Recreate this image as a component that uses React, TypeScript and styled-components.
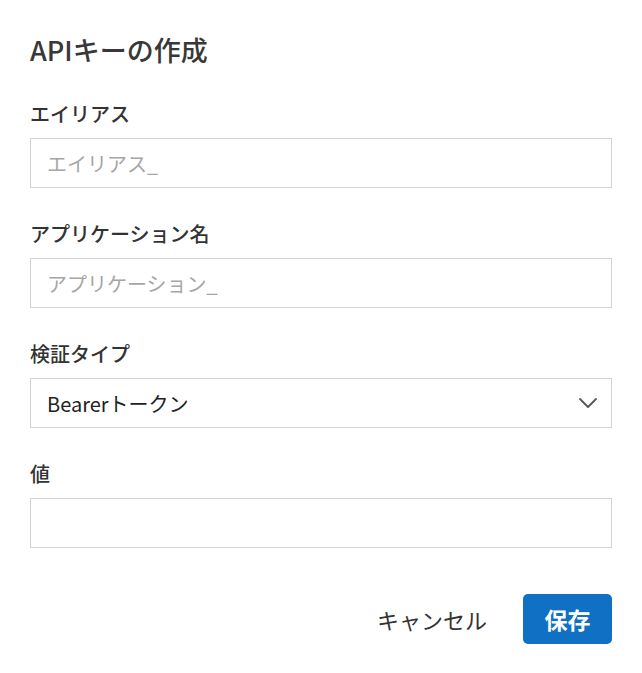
import styled, { createGlobalStyle } from "styled-components";

const GlobalStyle = createGlobalStyle`
  body {
    margin: 0;
    background: #ffffff;
    font-family: "Noto Sans CJK JP", "Noto Sans", sans-serif;
    color: #333333;
  }
`;

const Dialog = styled.div`
  width: 642px;
  box-sizing: border-box;
  padding: 32px 30px 0 30px;
`;

const Title = styled.h2`
  margin: 0 0 33px 0;
  font-size: 27px;
  line-height: 36px;
  font-weight: 500;
  color: #383838;
`;

const FormGroup = styled.div`
  display: flex;
  flex-direction: column;
  margin-bottom: 33px;
`;

const Label = styled.label`
  font-size: 20px;
  line-height: 26px;
  font-weight: 500;
  color: #333333;
  margin-bottom: 11px;
`;

const Input = styled.input`
  box-sizing: border-box;
  width: 100%;
  height: 50px;
  padding: 0 16px;
  border: 1px solid #d3d3d3;
  border-radius: 0;
  font-family: inherit;
  font-size: 20px;
  color: #222222;
  outline: none;
  &::placeholder {
    color: #a6a6a6;
  }
`;

const SelectBox = styled.div`
  position: relative;
  width: 100%;
`;

const Select = styled.select`
  box-sizing: border-box;
  width: 100%;
  height: 50px;
  padding: 0 48px 0 16px;
  border: 1px solid #d3d3d3;
  border-radius: 0;
  background: #ffffff;
  font-family: inherit;
  font-size: 20px;
  color: #222222;
  appearance: none;
  outline: none;
`;

const Chevron = styled.svg`
  position: absolute;
  right: 15px;
  top: 20px;
  pointer-events: none;
`;

const Actions = styled.div`
  display: flex;
  justify-content: flex-end;
  align-items: center;
  gap: 20px;
  margin-top: 46px;
`;

const CancelButton = styled.button`
  background: none;
  border: none;
  padding: 0 16px;
  height: 50px;
  font-family: inherit;
  font-size: 22px;
  color: #333333;
  cursor: pointer;
`;

const SaveButton = styled.button`
  background-color: #1070c4;
  color: #ffffff;
  border: none;
  height: 50px;
  width: 89px;
  border-radius: 5px;
  font-family: inherit;
  font-size: 23px;
  font-weight: 700;
  cursor: pointer;
`;

export default function App() {
  return (
    <>
      <GlobalStyle />
      <Dialog>
        <Title>APIキーの作成</Title>
        <FormGroup>
          <Label htmlFor="alias">エイリアス</Label>
          <Input id="alias" type="text" placeholder="エイリアス_" />
        </FormGroup>
        <FormGroup>
          <Label htmlFor="app">アプリケーション名</Label>
          <Input id="app" type="text" placeholder="アプリケーション_" />
        </FormGroup>
        <FormGroup>
          <Label htmlFor="auth">検証タイプ</Label>
          <SelectBox>
            <Select id="auth" defaultValue="bearer">
              <option value="bearer">Bearerトークン</option>
              <option value="basic">Basic認証</option>
            </Select>
            <Chevron width="18" height="10" viewBox="0 0 18 10" fill="none">
              <path d="M1 1l8 8 8-8" stroke="#555555" strokeWidth="1.8" strokeLinecap="round" strokeLinejoin="round" />
            </Chevron>
          </SelectBox>
        </FormGroup>
        <FormGroup>
          <Label htmlFor="value">値</Label>
          <Input id="value" type="text" />
        </FormGroup>
        <Actions>
          <CancelButton type="button">キャンセル</CancelButton>
          <SaveButton type="submit">保存</SaveButton>
        </Actions>
      </Dialog>
    </>
  );
}
